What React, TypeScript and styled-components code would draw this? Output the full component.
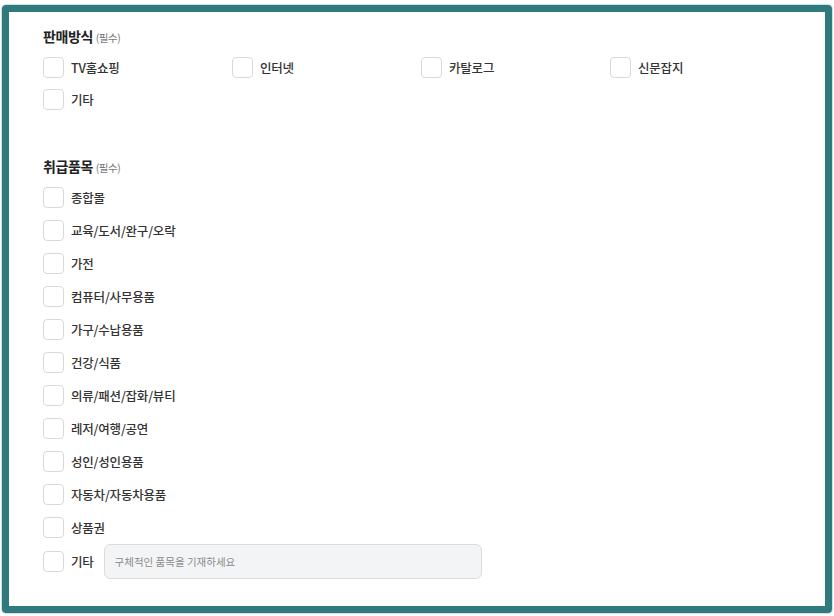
import React from 'react';
import styled, { createGlobalStyle } from 'styled-components';

const GlobalStyle = createGlobalStyle`
  html, body {
    margin: 0;
    padding: 0;
    background: #ffffff;
    font-family: "Noto Sans CJK KR", "Noto Sans", sans-serif;
  }
`;

const salesMethods = ['TV홈쇼핑', '인터넷', '카탈로그', '신문잡지', '기타'];

const categories = [
  '종합몰',
  '교육/도서/완구/오락',
  '가전',
  '컴퓨터/사무용품',
  '가구/수납용품',
  '건강/식품',
  '의류/패션/잡화/뷰티',
  '레저/여행/공연',
  '성인/성인용품',
  '자동차/자동차용품',
  '상품권',
];

const App: React.FC = () => {
  return (
    <Page>
      <GlobalStyle />
      <Frame>
        <Section>
          <Title>
            판매방식 <Required>(필수)</Required>
          </Title>
          <OptionGrid>
            {salesMethods.map((m) => (
              <Option key={m}>
                <Box />
                <Label>{m}</Label>
              </Option>
            ))}
          </OptionGrid>
        </Section>

        <Section>
          <Title>
            취급품목 <Required>(필수)</Required>
          </Title>
          <OptionList>
            {categories.map((c) => (
              <Option key={c}>
                <Box />
                <Label>{c}</Label>
              </Option>
            ))}
            <FieldRow>
              <Box />
              <Label>기타</Label>
              <TextInput placeholder="구체적인 품목을 기재하세요" />
            </FieldRow>
          </OptionList>
        </Section>
      </Frame>
    </Page>
  );
};

export default App;

const Page = styled.div`
  padding: 5px 2px 6px 2px;
`;

const Frame = styled.div`
  width: 830px;
  box-sizing: border-box;
  border: 7px solid #2f7a7c;
  border-radius: 4px;
  box-shadow: 0 0 0 1px #cfe0e0;
  padding: 14px 34px 27px 34px;
  display: flex;
  flex-direction: column;
  gap: 46px;
`;

const Section = styled.div`
  display: flex;
  flex-direction: column;
  gap: 8px;
`;

const Title = styled.div`
  font-size: 14px;
  font-weight: 700;
  color: #222;
  line-height: 20px;
  letter-spacing: -0.4px;
`;

const Required = styled.span`
  font-size: 10.5px;
  font-weight: 400;
  color: #777;
`;

const OptionGrid = styled.div`
  display: grid;
  grid-template-columns: repeat(4, 189px);
  row-gap: 10px;
`;

const OptionList = styled.div`
  display: flex;
  flex-direction: column;
  gap: 11px;
`;

const Option = styled.label`
  display: flex;
  align-items: center;
  height: 22px;
`;

const FieldRow = styled(Option)`
  height: 35px;
  margin-top: -5px;
`;

const Box = styled.span`
  width: 21px;
  height: 21px;
  box-sizing: border-box;
  border: 1px solid #d9d9d9;
  border-radius: 4px;
  background: #fff;
  flex-shrink: 0;
`;

const Label = styled.span`
  margin-left: 7px;
  font-size: 12.5px;
  font-weight: 500;
  color: #333;
  letter-spacing: -0.2px;
`;

const TextInput = styled.input`
  margin-left: 10px;
  width: 378px;
  height: 35px;
  box-sizing: border-box;
  border: 1px solid #dcdcdc;
  border-radius: 6px;
  background: #f3f4f6;
  padding: 0 10px;
  font-family: inherit;
  font-size: 10.5px;
  color: #333;
  outline: none;
  &::placeholder {
    color: #8a8a8a;
  }
`;
